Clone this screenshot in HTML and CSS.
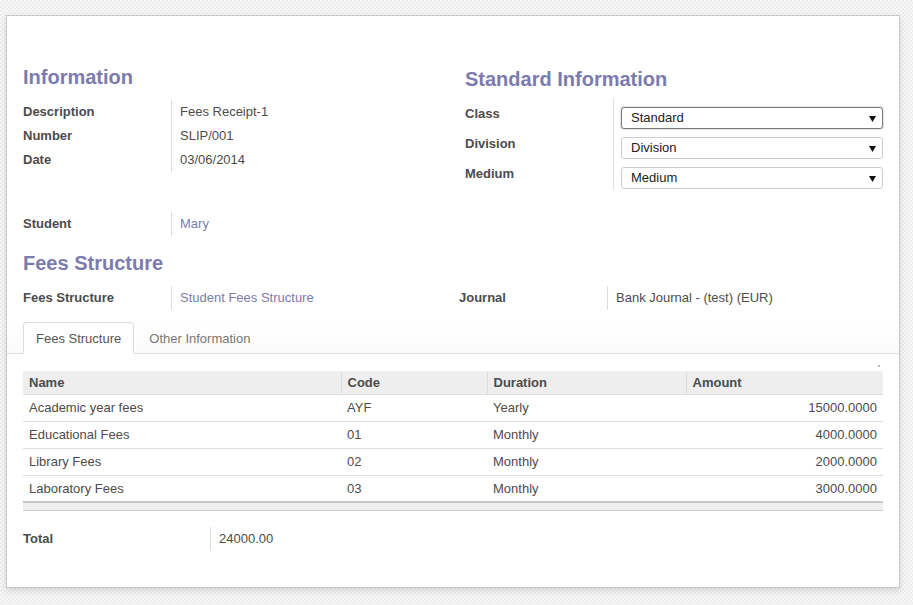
FILE: index.html
```html
<!DOCTYPE html>
<html>
<head>
<meta charset="utf-8">
<link rel="stylesheet" href="styles.css">
</head>
<body>
<div class="sheet">
  <div class="groups">
    <div class="group">
      <h2 class="title">Information</h2>
      <div class="fields info-fields">
        <div class="lbl">Description</div><div class="val">Fees Receipt-1</div>
        <div class="lbl">Number</div><div class="val">SLIP/001</div>
        <div class="lbl">Date</div><div class="val">03/06/2014</div>
      </div>
    </div>
    <div class="group">
      <h2 class="title title-right">Standard Information</h2>
      <div class="fields sel-fields">
        <div class="lbl">Class</div><div class="val"><div class="select focused">Standard<svg class="caret" width="7" height="6" viewBox="0 0 7 6"><path d="M0 0H7L3.5 6Z"/></svg></div></div>
        <div class="lbl">Division</div><div class="val"><div class="select">Division<svg class="caret" width="7" height="6" viewBox="0 0 7 6"><path d="M0 0H7L3.5 6Z"/></svg></div></div>
        <div class="lbl">Medium</div><div class="val"><div class="select">Medium<svg class="caret" width="7" height="6" viewBox="0 0 7 6"><path d="M0 0H7L3.5 6Z"/></svg></div></div>
      </div>
    </div>
  </div>

  <div class="fields student">
    <div class="lbl">Student</div><div class="val link">Mary</div>
  </div>

  <h2 class="title fees-title">Fees Structure</h2>

  <div class="fees-row">
    <div class="lbl">Fees Structure</div><div class="val link">Student Fees Structure</div>
    <div class="lbl">Journal</div><div class="val">Bank Journal - (test) (EUR)</div>
  </div>

  <div class="tabs">
    <div class="tab active">Fees Structure</div>
    <div class="tab">Other Information</div>
  </div>

  <div class="tab-pane">
    <div class="dot-row"><span class="dot"></span></div>
    <table class="grid">
      <thead>
        <tr><th class="c-name">Name</th><th class="c-code">Code</th><th class="c-dur">Duration</th><th class="c-amt">Amount</th></tr>
      </thead>
      <tbody>
        <tr><td>Academic year fees</td><td>AYF</td><td>Yearly</td><td class="num">15000.0000</td></tr>
        <tr><td>Educational Fees</td><td>01</td><td>Monthly</td><td class="num">4000.0000</td></tr>
        <tr><td>Library Fees</td><td>02</td><td>Monthly</td><td class="num">2000.0000</td></tr>
        <tr><td>Laboratory Fees</td><td>03</td><td>Monthly</td><td class="num">3000.0000</td></tr>
      </tbody>
      <tfoot>
        <tr><td colspan="4"></td></tr>
      </tfoot>
    </table>
    <div class="total-row">
      <div class="lbl">Total</div><div class="val">24000.00</div>
    </div>
  </div>
</div>
</body>
</html>
```

FILE: styles.css
```css
html, body {
  margin: 0;
  padding: 0;
}
body {
  font-family: "Liberation Sans", Arial, sans-serif;
  font-size: 13px;
  color: #4c4c4c;
  background-color: #f4f4f4;
  background-image: repeating-conic-gradient(#ececec 0 25%, #f8f8f8 0 50%);
  background-size: 4px 4px;
  padding: 15px 0 0 6px;
  height: 605px;
  box-sizing: border-box;
}
.sheet {
  width: 894px;
  height: 573px;
  box-sizing: border-box;
  background: #fff;
  border: 1px solid #c8c8d3;
  box-shadow: 0 3px 6px rgba(0,0,0,0.12);
  padding: 49px 16px 0 16px;
}
.title {
  margin: 0;
  font-size: 20px;
  line-height: 24px;
  font-weight: bold;
  color: #7c7bad;
}
.title-right {
  margin-top: 2px;
}
.groups {
  display: grid;
  grid-template-columns: 418px 418px;
  column-gap: 24px;
  align-items: start;
}
.fields {
  display: grid;
  grid-template-columns: 148px 1fr;
  margin-top: 10px;
}
.info-fields {
  margin-top: 11px;
}
.lbl {
  font-weight: bold;
  line-height: 24px;
  height: 24px;
  color: #4c4c4c;
  white-space: nowrap;
}
.val {
  line-height: 24px;
  border-left: 1px solid #ddd;
  padding-left: 8px;
  white-space: nowrap;
}
.sel-fields {
  margin-top: 8px;
}
.sel-fields .lbl {
  height: 30px;
  line-height: 18px;
  padding-top: 6px;
  box-sizing: border-box;
}
.sel-fields .val {
  height: 30px;
  padding-top: 8px;
  padding-left: 7px;
  box-sizing: border-box;
}
.select {
  position: relative;
  height: 22px;
  box-sizing: border-box;
  border: 1px solid #ccc;
  border-radius: 3px;
  padding-left: 9px;
  line-height: 20px;
  color: #222;
  background: #fff;
}
.select.focused {
  border-color: #7a7a7a;
  box-shadow: 0 0 2px rgba(0,0,0,0.35);
}
.caret {
  position: absolute;
  right: 6px;
  top: 8px;
  fill: #111;
}
.student {
  margin-top: 23px;
}
.fees-title {
  margin-top: 15px;
}
.fees-row {
  display: grid;
  grid-template-columns: 148px 288px 148px 1fr;
  margin-top: 11px;
}
.link {
  color: #7c7bad;
}
.tabs {
  display: flex;
  margin: 12px -16px 0 -16px;
  padding-left: 16px;
  border-bottom: 1px solid #ddd;
  height: 31px;
  background: linear-gradient(#ffffff, #fbfbfb);
}
.tab {
  height: 32px;
  box-sizing: border-box;
  padding: 0 12px;
  line-height: 31px;
  margin-right: 2px;
  border: 1px solid transparent;
  border-radius: 4px 4px 0 0;
  color: #777;
}
.tab.active {
  background: #fff;
  border-color: #ddd;
  border-bottom-color: #fff;
  color: #555;
}
.dot-row {
  height: 17px;
  display: flex;
  justify-content: flex-end;
  align-items: center;
}
.dot {
  width: 2px;
  height: 2px;
  background: #bbb;
  margin-right: 3px;
  margin-top: 7px;
}
.grid {
  width: 860px;
  border-collapse: collapse;
  table-layout: fixed;
}
.grid th {
  background: #eee;
  height: 23px;
  padding: 0 6px;
  text-align: left;
  font-weight: bold;
  color: #4c4c4c;
  border-left: 1px solid #ddd;
  border-bottom: 1px solid #ddd;
  box-sizing: border-box;
}
.grid th:first-child { border-left: none; }
.c-name { width: 318px; }
.c-code { width: 146px; }
.c-dur { width: 199px; }
.c-amt { width: 197px; }
.grid td {
  height: 27px;
  padding: 0 6px;
  border-top: 1px solid #ddd;
  box-sizing: border-box;
  white-space: nowrap;
}
.grid tbody tr:first-child td { border-top: none; height: 27px; }
.grid td.num { text-align: right; }
.grid tfoot td {
  height: 8px;
  padding: 0;
  background: #eee;
  border-top: 2px solid #c8c8c8;
  border-bottom: 1px solid #ccc;
}
.total-row {
  display: grid;
  grid-template-columns: 187px 1fr;
  margin-top: 16px;
}
```
